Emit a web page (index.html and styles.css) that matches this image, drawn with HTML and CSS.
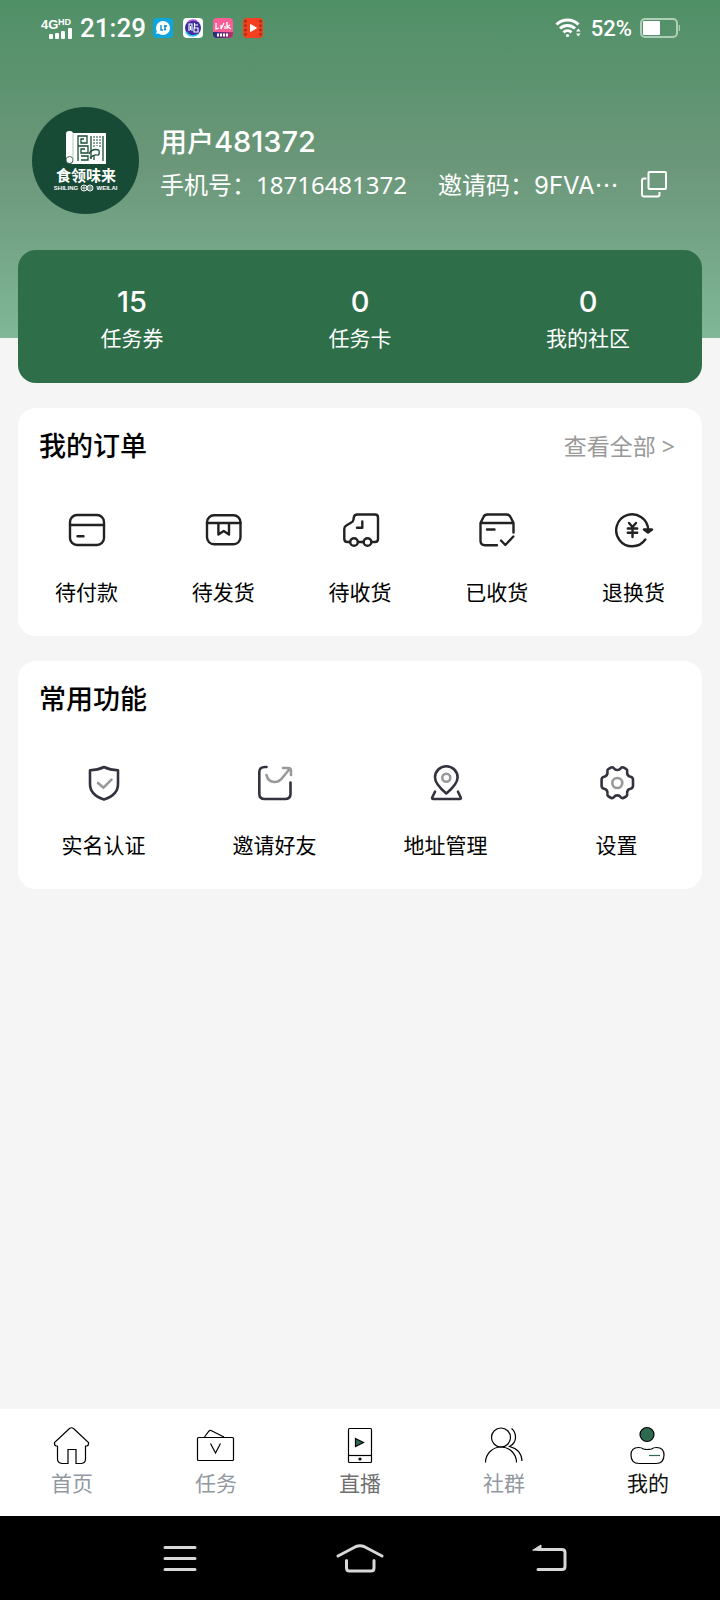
FILE: index.html
```
<!DOCTYPE html>
<html lang="zh-CN">
<head>
    <meta charset="UTF-8">
    <meta name="viewport" content="width=device-width, initial-scale=1.0">
    <title>我的</title>
    <link rel="stylesheet" href="styles.css">
</head>
<body>
    <header class="header">
        <div class="status-bar">
            <div class="status-left">
                <svg class="signal" width="34" height="24" viewBox="0 0 34 24" fill="#fff">
                    <text x="1" y="13" class="signal-net">4G</text>
                    <text x="18" y="9" class="signal-hd">HD</text>
                    <rect x="9" y="18" width="4" height="5" rx="1"/>
                    <rect x="15" y="17" width="4" height="6" rx="1"/>
                    <rect x="21" y="15" width="4" height="8" rx="1"/>
                    <rect x="28" y="12" width="4" height="11" rx="1"/>
                </svg>
                <span class="clock">21:29</span>
                <div class="notices">
                    <svg width="20" height="20" viewBox="0 0 20 20">
                        <rect width="20" height="20" rx="4" fill="#0ea5dc"/>
                        <circle cx="10" cy="10" r="7" fill="#fff"/>
                        <path d="M4 13l-1 3 4-1z" fill="#fff"/>
                        <path d="M8 7v5h2M12 7v5M11 8h3M11 12l2-1" stroke="#0e8fc4" stroke-width="1.4" fill="none"/>
                    </svg>
                    <svg width="20" height="20" viewBox="0 0 20 20">
                        <rect width="20" height="20" rx="4" fill="#fff"/>
                        <circle cx="10" cy="10" r="8" fill="#3d2f9e"/>
                        <path d="M3 14a8 8 0 0 0 12 2" stroke="#2bc4ea" stroke-width="1.6" fill="none"/>
                        <path d="M5 4a8 8 0 0 1 9-1" stroke="#b455d8" stroke-width="1.4" fill="none"/>
                        <path d="M6 13V6h3v7M7.500 8v4M11.500 5v5M11.500 7H15M11 10h4v4h-4z" stroke="#fff" stroke-width="1.100" fill="none"/>
                    </svg>
                    <svg width="20" height="20" viewBox="0 0 20 20">
                        <defs>
                            <linearGradient id="strip">
                                <stop offset="0" stop-color="#15307c"/>
                                <stop offset="1" stop-color="#c32f6b"/>
                            </linearGradient>
                        </defs>
                        <rect width="20" height="20" rx="4" fill="#fb5e94"/>
                        <path d="M0 14h20v2a4 4 0 0 1-4 4H4a4 4 0 0 1-4-4z" fill="url(#strip)"/>
                        <path d="M3 5v6l3-1M8 7v4l3-6M12 8v3M14 4v7M14 9l3-2M15 9l3 2" stroke="#fff" stroke-width="1.300" fill="none"/>
                        <path d="M4 17h12" stroke="#fff" stroke-width="3" stroke-dasharray="2 1"/>
                    </svg>
                    <svg width="20" height="20" viewBox="0 0 20 20">
                        <rect width="20" height="20" rx="4" fill="#f4401f"/>
                        <path d="M2.500 2v17M17.500 2v17" stroke="#a32a12" stroke-width="2.400" stroke-dasharray="2.400 2"/>
                        <path d="M7.500 6.500l6 3.500-6 3.500z" fill="#fff" stroke="#fff" stroke-linejoin="round"/>
                    </svg>
                </div>
            </div>
            <div class="status-right">
                <svg width="28" height="20" viewBox="0 0 28 20" fill="none" stroke="#fff" stroke-width="3">
                    <path d="M1.500 6.500a16 16 0 0 1 22 0"/>
                    <path d="M5 10.500a11 11 0 0 1 15 0"/>
                    <path d="M8.500 14.300a6 6 0 0 1 8 0"/>
                    <circle cx="12.500" cy="17.500" r="1.600" fill="#fff" stroke="none"/>
                    <path d="M21 13.500l2.300-3 2.300 3zM21 15.500l2.300 3 2.300-3z" fill="#fff" stroke="none"/>
                </svg>
                <span class="percent">52%</span>
                <svg width="40" height="20" viewBox="0 0 40 20">
                    <rect x="1" y="1" width="36" height="18" rx="4" fill="none" stroke="#b0cfb9" stroke-width="2"/>
                    <rect x="3" y="3" width="17" height="14" rx="1" fill="#fff"/>
                    <path d="M39.300 7v6" stroke="#b0cfb9" stroke-width="1.200"/>
                </svg>
            </div>
        </div>

        <div class="profile">
            <svg class="avatar" width="107" height="107" viewBox="0 0 107 107">
                <circle cx="53.500" cy="53.500" r="53.500" fill="#184b36"/>
                <!-- 卷轴 -->
                <rect x="34" y="24" width="7" height="31" rx="3" fill="#fff"/>
                <path d="M41 26h33v31H38q3-1 3-4z" fill="#fff"/>
                <circle cx="37.500" cy="53" r="3.500" fill="#fff" stroke="#184b36" stroke-width=".8"/>
                <path d="M41 27v27" stroke="#9db8aa" stroke-width=".8"/>
                <g fill="none" stroke="#184b36" stroke-width="1.300">
                    <path d="M46 54V29h9v7h-6v-4h3M46 39h10v7h-7v-4h4M49 49h7v4h-7M59 29v23M71 29v25"/>
                    <path d="M62 29v12M65 29v10M68 29v12" stroke-width="1" stroke-dasharray="2 1"/>
                    <path d="M57 47q3-6 10-4M58 51q4-4 7-3t2-5M62 53v-5"/>
                </g>
                <text x="54" y="74" class="logo-name">食领味来</text>
                <text x="34" y="83" class="logo-sub" text-anchor="middle">SHILING</text>
                <text x="75" y="83" class="logo-sub" text-anchor="middle">WEILAI</text>
                <circle cx="52" cy="81" r="3" fill="none" stroke="#fff"/>
                <circle cx="58" cy="81" r="3" fill="none" stroke="#fff"/>
                <path d="M50 81h4M52 79v4M56 80h4M56 82h4" stroke="#fff" stroke-width=".8"/>
            </svg>
            <div class="profile-info">
                <h1 class="user-name">用户<span class="user-id">481372</span></h1>
                <div class="user-meta">
                    <span>手机号：18716481372</span>
                    <span class="invite">邀请码：<span class="code">9FVA</span><span class="dots">⋯</span></span>
                    <button class="copy-btn" type="button" aria-label="复制邀请码">
                        <svg width="28" height="28" viewBox="0 0 28 28" fill="none" stroke="#fff" stroke-width="2" stroke-linejoin="round">
                            <rect x="8.500" y="1" width="17.500" height="17" rx="1"/>
                            <path d="M6.500 7.500H4q-2 0-2 2v14q0 2 2 2h13.500q2 0 2-2V21"/>
                        </svg>
                    </button>
                </div>
            </div>
        </div>
    </header>

    <main class="content">
        <section class="stats">
            <a href="#" class="stat"><b>15</b><span>任务券</span></a>
            <a href="#" class="stat"><b>0</b><span>任务卡</span></a>
            <a href="#" class="stat"><b>0</b><span>我的社区</span></a>
        </section>

        <section class="card">
            <div class="card-head">
                <h2>我的订单</h2>
                <a href="#" class="more">查看全部 &gt;</a>
            </div>
            <nav class="grid orders">
                <a href="#">
                    <svg class="icon" viewBox="0 0 40 40">
                        <rect x="4" y="5" width="34" height="30" rx="7"/>
                        <path d="M4 15h34M11.500 26.300h6"/>
                    </svg>
                    <span>待付款</span>
                </a>
                <a href="#">
                    <svg class="icon" viewBox="0 0 40 40">
                        <rect x="4" y="5.300" width="33.500" height="29" rx="7"/>
                        <path d="M4 13h33.500M15.400 13v11.500l5.300-3.500 5.300 3.500V13"/>
                    </svg>
                    <span>待发货</span>
                </a>
                <a href="#">
                    <svg class="icon" viewBox="0 0 40 40">
                        <path d="M10 32H7.500Q4.300 32 4.300 29V19q0-2.500 2-3.500l5-3q2-1 2.200-3l.3-2q.4-3 3.500-3H35q3 0 3 3V29q0 3-3 3h-3.500M18 32h5.500M22.300 11.500v6.200H17"/>
                        <circle cx="14" cy="32" r="3.800"/>
                        <circle cx="27.500" cy="32" r="3.800"/>
                    </svg>
                    <span>待收货</span>
                </a>
                <a href="#">
                    <svg class="icon" viewBox="0 0 40 40">
                        <path d="M20 35.300H8q-4.500 0-4.500-4.500V13L6.500 7q1-2.500 4-2.500h19q3 0 4 2.500l3 6v9.500M3.500 13h33M10 19.500h7.500M24 30.500l4.300 4.500 8-8.500"/>
                    </svg>
                    <span>已收货</span>
                </a>
                <a href="#">
                    <svg class="icon" viewBox="0 0 40 40">
                        <path d="M31.300 29.500A16 16 0 1 1 34.200 20"/>
                        <path d="M30 19.500l4 3 4-3z" fill="#222"/>
                        <path d="M15 13l3.500 4 3.500-4M18.500 17v10M13.800 18.500h9.400M13.800 22.800h9.400"/>
                    </svg>
                    <span>退换货</span>
                </a>
            </nav>
        </section>

        <section class="card">
            <div class="card-head">
                <h2>常用功能</h2>
            </div>
            <nav class="grid tools">
                <a href="#">
                    <svg class="icon" viewBox="0 0 40 40">
                        <path d="M20 4Q14 7 6 7.300V21q0 11 14 15.500Q34 32 34 21V7.300Q26 7 20 4z"/>
                        <path class="soft" d="M14 20l5.500 4.700 8-8"/>
                    </svg>
                    <span>实名认证</span>
                </a>
                <a href="#">
                    <svg class="icon" viewBox="0 0 40 40">
                        <path d="M11.500 4H10Q4.300 4 4.300 9v22q0 5 5.500 5h20q5.700 0 5.700-5V19.500"/>
                        <path class="soft" d="M11.500 12q1.500 7 8 7 5 0 8.500-5l7-8.500M28 5h5q3 0 3 3v4"/>
                    </svg>
                    <span>邀请好友</span>
                </a>
                <a href="#">
                    <svg class="icon" viewBox="0 0 40 40">
                        <path d="M20.300 30.500Q9 21 9 14.500a11.300 11.300 0 0 1 22.600 0Q31.600 21 20.300 30.500z"/>
                        <path d="M9 28.700l-2.800 5.800q-.4 1.500 1 1.500h26.600q1.400 0 1-1.500L32 28.700"/>
                        <circle class="soft" cx="20.300" cy="14.700" r="4"/>
                    </svg>
                    <span>地址管理</span>
                </a>
                <a href="#">
                    <svg class="icon" viewBox="0 0 40 40">
                        <path d="M20.300 7q2.200 0 3.500-1.800 1-1.300 2.500-.8l2.700 1.500q1.500.8 1.200 2.500-.6 4.500 3.300 5.300 2.500.5 2.500 3v6q0 2.500-2.500 3-3.900.8-3.300 5.300.3 1.700-1.200 2.500l-2.700 1.500q-1.500.5-2.500-.8-1.300-1.800-3.500-1.800t-3.500 1.800q-1 1.300-2.500.8l-2.700-1.500q-1.500-.8-1.200-2.500.6-4.500-3.300-5.300-2.500-.5-2.500-3v-6q0-2.500 2.500-3 3.900-.8 3.300-5.300-.3-1.700 1.200-2.500l2.700-1.500q1.500-.5 2.500.8 1.300 1.800 3.500 1.800z"/>
                        <circle class="soft" cx="20.300" cy="20" r="5"/>
                    </svg>
                    <span>设置</span>
                </a>
            </nav>
        </section>
    </main>

    <nav class="tab-bar">
        <a href="#">
            <svg viewBox="0 0 40 40">
                <path d="M5.500 21H4q-2-1-1.500-3.500L17.500 3.500q2-1.500 4 0l15 14Q37 20 35 21h-1.500v13q0 4-4 4.500H24V24.500h-8v14h-6q-4.500-.5-4.500-4.500z"/>
            </svg>
            <span>首页</span>
        </a>
        <a href="#">
            <svg viewBox="0 0 40 40">
                <rect x="1.500" y="12.500" width="36" height="23" rx="1"/>
                <path d="M8.500 12l4.500-6q1-1 2-.5L28 12M14.500 18.500l5 9.500 5-9.500"/>
            </svg>
            <span>任务</span>
        </a>
        <a href="#" class="live">
            <svg viewBox="0 0 40 40">
                <rect x="8.500" y="3.500" width="23" height="34" rx="1"/>
                <path d="M8.500 30.500h23"/>
                <path d="M15.500 13.500l8 4-8 4z" fill="#2d6a4f"/>
                <circle cx="20" cy="34" r="1" fill="#000"/>
            </svg>
            <span>直播</span>
        </a>
        <a href="#">
            <svg viewBox="0 0 40 40">
                <circle cx="17" cy="12.500" r="9.500"/>
                <path d="M1.500 37.500a15.500 15.500 0 0 1 31 0M27.500 3.500q4 3 4 9t-6 9q12 3 12.500 14.500"/>
            </svg>
            <span>社群</span>
        </a>
        <a href="#" class="active">
            <svg viewBox="0 0 40 40">
                <circle cx="19" cy="9.500" r="7" fill="#2d6a4f"/>
                <path d="M10.500 22.500q3 0 5 1.500 3.500 1 8 0 2-1.500 5-1.500 7.500 0 7.500 7.500 0 8.500-8 8.500H11q-8 0-8-8.500 0-7.500 7.500-7.500z"/>
                <path d="M21 30.500h11" stroke="#2d6a4f"/>
            </svg>
            <span>我的</span>
        </a>
    </nav>

    <div class="system-nav">
        <button type="button" aria-label="最近任务">
            <svg viewBox="0 0 48 32"><path d="M9 5.500h30M9 16.500h30M9 27.500h30"/></svg>
        </button>
        <button type="button" aria-label="主屏幕">
            <svg viewBox="0 0 48 32"><path d="M2 14L20 4.500q4-1.500 8 0L46 14M10.500 18.500V26q0 3 3 3h21.500q3 0 3-3v-7.500"/></svg>
        </button>
        <button type="button" aria-label="返回">
            <svg viewBox="0 0 48 32"><path d="M22 27.500h24q3 0 3-3v-14q0-3-3-3H22"/><path d="M17 8l8-5v5z" fill="#d8d8d8" stroke-width="1"/></svg>
        </button>
    </div>
</body>
</html>
```

FILE: styles.css
```
* {
    margin: 0;
    padding: 0;
    box-sizing: border-box;
}

body {
    min-height: 100vh;
    display: flex;
    flex-direction: column;
    background: #f5f5f5;
    color: #000;
    font-family: 'Noto Sans', 'Noto Sans CJK SC', sans-serif;
}

a {
    color: inherit;
    text-decoration: none;
}

button {
    border: none;
    background: none;
    cursor: pointer;
}

svg {
    display: block;
    flex-shrink: 0;
}

/* 顶部 */
.header {
    padding-bottom: 124px;
    background: linear-gradient(180deg, #509067 0%, #6c977a 50%, #7fb797 100%);
    color: #fff;
}

.status-bar {
    height: 56px;
    padding: 0 40px;
    display: flex;
    justify-content: space-between;
    align-items: center;
}

.status-left,
.status-right {
    display: flex;
    align-items: center;
    gap: 6px;
}

.status-right {
    gap: 8px;
}

.signal-net,
.signal-hd {
    font-family: 'Liberation Sans', sans-serif;
    font-weight: 700;
}

.signal-net {
    font-size: 13px;
}

.signal-hd {
    font-size: 9px;
}

.clock {
    font-family: Roboto, sans-serif;
    font-size: 26px;
    font-weight: 500;
}

.percent {
    font-family: Roboto, sans-serif;
    font-size: 22px;
    font-weight: 500;
}

.notices {
    display: flex;
    gap: 10px;
    margin-left: 1px;
}

.profile {
    padding: 51px 32px 0;
    display: flex;
    align-items: center;
    gap: 21px;
}

.logo-name {
    font-size: 15px;
    font-weight: 700;
    fill: #fff;
    text-anchor: middle;
}

.logo-sub {
    font-family: 'Liberation Sans', sans-serif;
    font-size: 6px;
    font-weight: 700;
    fill: #fff;
}

.profile-info {
    flex: 1;
    padding-top: 2px;
    display: flex;
    flex-direction: column;
    gap: 8px;
}

.user-name {
    font-size: 27px;
    font-weight: 500;
    line-height: 38px;
}

.user-id {
    font-family: Inter, sans-serif;
    font-size: 29px;
    font-weight: 500;
}

.user-meta {
    display: flex;
    align-items: center;
    font-size: 24px;
    line-height: 30px;
    white-space: nowrap;
}

.invite {
    margin-left: 31px;
}

.code {
    font-family: Inter, sans-serif;
}

.dots {
    font-family: 'Noto Sans CJK SC', sans-serif;
}

.copy-btn {
    height: 30px;
    margin-left: 21px;
}

/* 内容 */
.content {
    margin-top: -88px;
    padding: 0 18px;
    display: flex;
    flex-direction: column;
    gap: 25px;
}

.stats {
    padding: 34px 0 30px;
    display: grid;
    grid-template-columns: repeat(3, 1fr);
    border-radius: 18px;
    background: #2e6e49;
    color: #fff;
}

.stat {
    display: flex;
    flex-direction: column;
    align-items: center;
    gap: 3px;
    font-size: 21px;
    line-height: 30px;
}

.stat b {
    font-family: Inter, sans-serif;
    font-size: 29px;
    font-weight: 500;
    line-height: 36px;
}

.card {
    padding: 20px 0 29px;
    border-radius: 18px;
    background: #fff;
}

.card-head {
    padding: 0 27px 0 21px;
    display: flex;
    justify-content: space-between;
    align-items: center;
    line-height: 36px;
}

.card-head h2 {
    font-size: 27px;
    font-weight: 500;
}

.more {
    color: #999;
    font-size: 23px;
}

.grid {
    margin-top: 46px;
    display: grid;
}

.orders {
    grid-template-columns: repeat(5, 1fr);
}

.tools {
    grid-template-columns: repeat(4, 1fr);
}

.grid a {
    display: flex;
    flex-direction: column;
    align-items: center;
    gap: 27px;
    font-size: 21px;
    line-height: 30px;
}

.icon {
    width: 40px;
    height: 40px;
    fill: none;
    stroke: #222;
    stroke-width: 2.4;
    stroke-linecap: round;
    stroke-linejoin: round;
}

.tools .icon {
    stroke: #33333f;
    stroke-width: 2.6;
}

.tools .soft {
    stroke: #999;
}

/* 底部导航 */
.tab-bar {
    margin-top: auto;
    padding: 16px 0 18px;
    display: grid;
    grid-template-columns: repeat(5, 1fr);
    background: #fff;
    color: #92989f;
}

.tab-bar a {
    display: flex;
    flex-direction: column;
    align-items: center;
    gap: 3px;
    font-size: 21px;
    line-height: 30px;
}

.tab-bar svg {
    width: 40px;
    height: 40px;
    fill: none;
    stroke: #000;
    stroke-width: 1.2;
}

.tab-bar .live {
    color: #707070;
}

.tab-bar .active {
    color: #111;
}

.system-nav {
    height: 84px;
    padding: 0 12.5%;
    display: grid;
    grid-template-columns: repeat(3, 1fr);
    align-items: center;
    justify-items: center;
    background: #000;
}

.system-nav svg {
    width: 48px;
    height: 32px;
    fill: none;
    stroke: #d8d8d8;
    stroke-width: 3;
    stroke-linecap: round;
    stroke-linejoin: round;
    overflow: visible;
}
```
